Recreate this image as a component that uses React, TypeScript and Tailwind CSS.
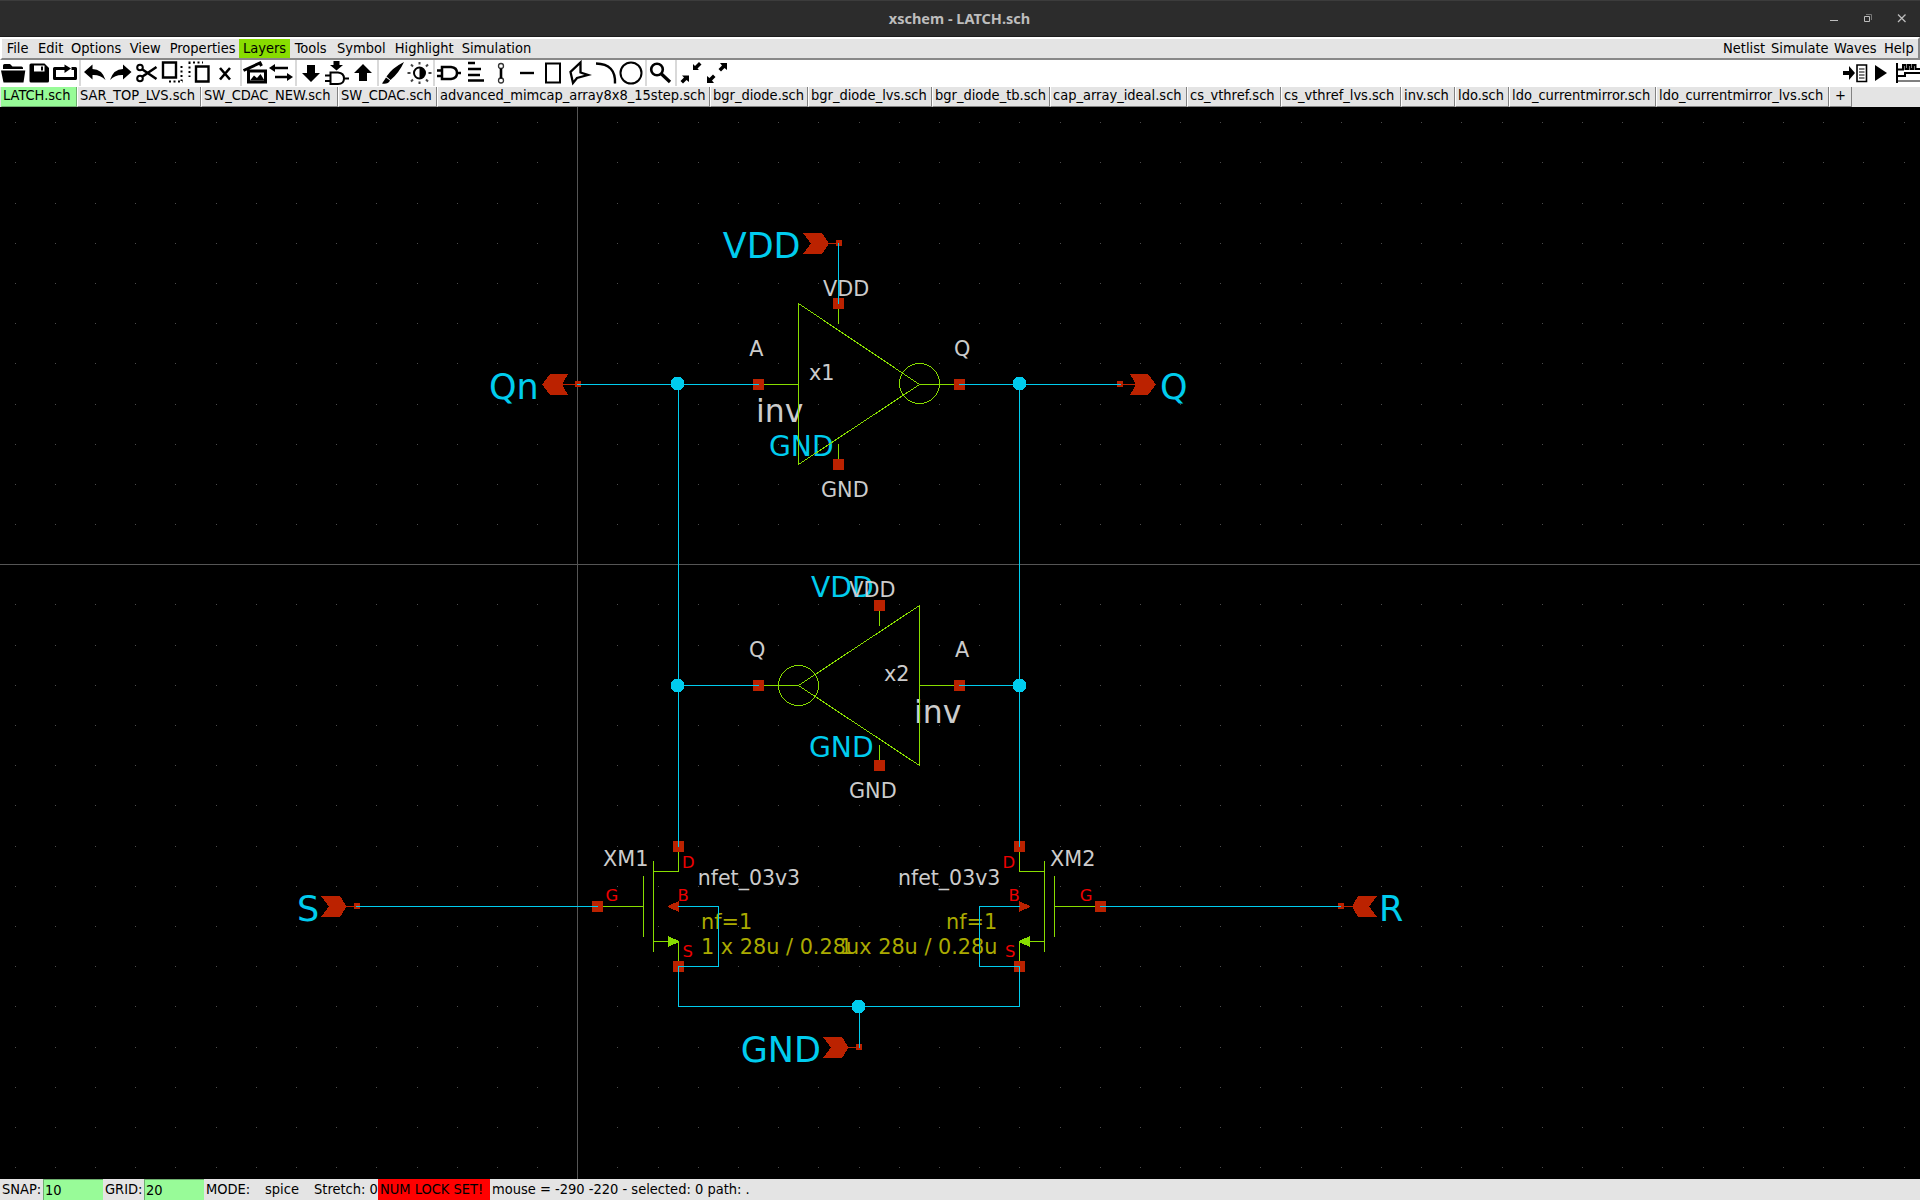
import React from "react";

const CYAN = "#00ccee";
const GREEN = "#88dd00";
const RED = "#bb2200";
const GREY = "#cccccc";
const OLIVE = "#aaaa00";
const PIN = "#ee0000";

const leftMenu: [string, number][] = [
  ["File", 32], ["Edit", 33], ["Options", 58], ["View", 40], ["Properties", 74],
  ["Layers", 51], ["Tools", 43], ["Symbol", 57], ["Highlight", 67], ["Simulation", 80],
];
const rightMenu: [string, number][] = [["Netlist", 48], ["Simulate", 63], ["Waves", 50], ["Help", 38]];

const tabs: [string, number][] = [
  ["LATCH.sch", 76], ["SAR_TOP_LVS.sch", 124], ["SW_CDAC_NEW.sch", 137], ["SW_CDAC.sch", 99],
  ["advanced_mimcap_array8x8_15step.sch", 273], ["bgr_diode.sch", 98], ["bgr_diode_lvs.sch", 124],
  ["bgr_diode_tb.sch", 118], ["cap_array_ideal.sch", 137], ["cs_vthref.sch", 94],
  ["cs_vthref_lvs.sch", 120], ["inv.sch", 54], ["ldo.sch", 54], ["ldo_currentmirror.sch", 147],
  ["ldo_currentmirror_lvs.sch", 173], ["+", 23],
];

// Each icon is drawn in window coordinates; x and w give its slice of the toolbar.
function Icon({ x, w, children }: { x: number; w: number; children?: React.ReactNode }) {
  return (
    <svg className="block shrink-0" width={w} height={26} viewBox={`${x} 60 ${w} 26`} fill="none" stroke="#000" strokeWidth={2}>
      {children}
    </svg>
  );
}

const Sep = () => <div className="h-[26px] w-[2px] shrink-0 bg-[#d9d9d9]" />;

function Toolbar() {
  return (
    <div className="flex h-[27px] w-full shrink-0 bg-white">
      <Icon x={0} w={27}>
        <path d="M3 69V65.5Q3 64 4.500 64H10L12.500 66.500H21.500Q23 66.500 23 68V69ZM1 70.500H25.300L23.500 82.500H3.500Z" fill="#000" stroke="none" />
      </Icon>
      <Icon x={27} w={24}>
        <path d="M31 63.500H44.500L49 68V81Q49 82.500 47.500 82.500H31Q29.500 82.500 29.500 81V65Q29.500 63.500 31 63.500Z" fill="#000" stroke="none" />
        <path d="M34 65.500H44.500V71.500H34Z" fill="#fff" stroke="none" />
        <path d="M41 66.500H43V70.500H41Z" fill="#000" stroke="none" />
      </Icon>
      <Icon x={51} w={28}>
        <path d="M65 68.500H54.500V78.500H75.500V68.500H71.500" strokeWidth={3} strokeLinejoin="round" />
        <path d="M64.500 64.500L71 68.500L64.500 73Z" fill="#000" stroke="none" />
      </Icon>
      <Sep />
      <Icon x={81} w={27}>
        <path d="M84 72L92.500 64.500V69Q102 69 105.500 80Q100 74.500 92.500 75V79.500Z" fill="#000" stroke="none" />
      </Icon>
      <Icon x={108} w={26}>
        <path d="M131.500 72L123 64.500V69Q113.500 69 110 80Q115.500 74.500 123 75V79.500Z" fill="#000" stroke="none" />
      </Icon>
      <Icon x={134} w={25}>
        <circle cx={140} cy={67.500} r={2.800} /><circle cx={140} cy={78.500} r={2.800} />
        <path d="M142.500 69.500L156.500 79M142.500 76.500L156.500 67" strokeWidth={2.600} />
      </Icon>
      <Icon x={159} w={28}>
        <path d="M163 62.500H176V77.500H163Z" strokeWidth={2.400} />
        <path d="M169 81.500H183M181.500 66V81" strokeDasharray="2 2.500" />
      </Icon>
      <Icon x={187} w={26}>
        <path d="M196 66.500H208.500V81.500H196Z" strokeWidth={2.400} />
        <path d="M188.500 62.500H203M189.500 62V77" strokeDasharray="2 2.500" />
      </Icon>
      <Icon x={213} w={27}><path d="M220 68L230 79.500M230 68L220 79.500" strokeWidth={2.600} /></Icon>
      <Sep />
      <Icon x={242} w={26}>
        <path d="M248.500 71H265.500V82H248.500ZM243.500 70.500L260 63L261.500 66" strokeWidth={3} />
        <path d="M250 80.500L254 75.500L257 78L260.500 74L264.500 80.500Z" fill="#000" stroke="none" />
      </Icon>
      <Icon x={268} w={27}>
        <path d="M273 68H288M275 77H290" strokeWidth={2.400} />
        <path d="M269 68L275 64V72ZM293 77L287 73V81Z" fill="#000" stroke="none" />
      </Icon>
      <Sep />
      <Icon x={297} w={26}><path d="M307 65H315V73H320L311 82L302 73H307Z" fill="#000" stroke="none" /></Icon>
      <Icon x={323} w={28}>
        <path d="M333.500 61H339.500V65H343L336.500 70.500L330 65H333.500Z" fill="#000" stroke="none" />
        <path d="M330.500 72.500H338Q344 73 344 78.500Q344 84 338 84H330.500ZM325 75.500H330M325 81H330M344 78.500H349" />
      </Icon>
      <Icon x={351} w={26}><path d="M359 81V73H354L363 64L372 73H367V81Z" fill="#000" stroke="none" /></Icon>
      <Sep />
      <Icon x={379} w={26}>
        <path d="M404 62Q392 68 386.500 76.500L390.500 80Q399 73 404 62ZM386 77.500L390 80.500Q388 84.500 382 83.500Q384.500 80 386 77.500Z" fill="#000" stroke="none" />
      </Icon>
      <Icon x={405} w={28}>
        <circle cx={419.500} cy={73} r={5.500} />
        <path d="M419.500 67.500A5.500 5.500 0 0 1 419.500 78.500Z" fill="#000" stroke="none" />
        <path d="M419.500 62V64.500M419.500 81.500V84M407.500 73H410.500M428.500 73H431.500M411 64.500L413 66.500M428 64.500L426 66.500M411 81.500L413 79.500M428 81.500L426 79.500" stroke="#444" />
      </Icon>
      <Sep />
      <Icon x={435} w={29}>
        <path d="M442 67H451Q457 67.500 457 73Q457 78.500 451 79H442ZM437 70.500H442M437 76H442M457 73H461" strokeWidth={2.500} />
      </Icon>
      <Icon x={464} w={24}><path d="M468 63H475M468 69H481M468 75H480M468 80.500H484" strokeWidth={2.400} /></Icon>
      <Icon x={488} w={28}>
        <circle cx={501} cy={66} r={2.500} strokeWidth={1.300} stroke="#333" /><circle cx={501} cy={80.500} r={2.500} strokeWidth={1.300} stroke="#333" />
        <path d="M501 68.500V78.500" strokeWidth={2.600} />
      </Icon>
      <Icon x={516} w={26}><path d="M520 73H534" strokeWidth={2.400} /></Icon>
      <Icon x={542} w={24}><path d="M546 63.500H560V82.500H546Z" /></Icon>
      <Icon x={566} w={28}><path d="M580.500 62.500V72.500L588 75L577 78L573 83L570.500 72Z" strokeWidth={2.300} /></Icon>
      <Icon x={594} w={24}><path d="M596 63.500Q616 64 615 83.500" strokeWidth={2.400} /></Icon>
      <Icon x={618} w={27}><circle cx={631} cy={73} r={10.500} /></Icon>
      <Sep />
      <Icon x={647} w={28}>
        <circle cx={657} cy={69.500} r={5.800} strokeWidth={2.600} /><path d="M661.500 74L670 82" strokeWidth={3.200} />
      </Icon>
      <Sep />
      <Icon x={677} w={27}>
        <path d="M693 70V64L695 66L699 62L701.500 64.500L697.500 68.500L699 70ZM689 75.500V82L686.500 80L683 83.500L680.500 81L684 77.500L682 75.500Z" fill="#000" stroke="none" />
      </Icon>
      <Icon x={704} w={28}>
        <path d="M727 63V70L724.500 68L721 71.500L718.500 69L722 65.500L720 63ZM707 83V76L709.500 78L713 74.500L715.500 77L712 80.500L714 83Z" fill="#000" stroke="none" />
      </Icon>
      <div className="flex-1" />
      <Icon x={1840} w={30}>
        <path d="M1843 71H1849V66L1855 73L1849 80V75H1843Z" fill="#000" stroke="none" />
        <path d="M1857 65H1866.500V81.500H1857Z" strokeWidth={1.600} />
        <path d="M1859 69H1864.500M1859 72H1864.500M1859 75H1864.500M1859 78H1864.500" strokeWidth={1} />
      </Icon>
      <Icon x={1870} w={24}><path d="M1875 65L1887 73L1875 81Z" fill="#000" stroke="none" /></Icon>
      <Icon x={1894} w={26}>
        <path d="M1897 63V83M1897 69.500H1903V65H1905.500V69H1908V65H1910.500V69H1913V65H1915.500V69H1920M1897 76H1905V73H1920" />
        <path d="M1897 81H1920" strokeWidth={1} />
      </Icon>
    </div>
  );
}

function T({ x, y, s = 20.8, c = GREY, children }: { x: number; y: number; s?: number; c?: string; children: React.ReactNode }) {
  return <text x={x} y={y} fontSize={s} fill={c}>{children}</text>;
}

const Pin = ({ x, y }: { x: number; y: number }) => <rect x={x - 5} y={y - 5} width={11} height={11} fill={RED} />;
const SmallPin = ({ x, y }: { x: number; y: number }) => <rect x={x - 3} y={y - 3} width={6} height={6} fill={RED} />;
const Dot = ({ x, y }: { x: number; y: number }) => <circle cx={x} cy={y} r={6.8} fill={CYAN} />;

const dots: [number, number][] = [];
for (let i = 0; i < 48; i++)
  for (let j = 0; j < 27; j++) dots.push([Math.floor(15.1 + 40.19 * i), Math.floor(122.7 + 40.19 * j)]);

function Schematic() {
  return (
    <svg
      className="block h-[1072px] w-[1920px] shrink-0 bg-black font-['DejaVu_Sans',sans-serif]"
      viewBox="0 107 1920 1072"
      shapeRendering="crispEdges"
    >
      <path d={dots.map(([x, y]) => `M${x} ${y}h1v1h-1z`).join("")} fill="#4c4c4c" />
      <path d="M577.500 107V1179M0 564.500H1920" stroke="#555555" />

      <T x={722.7} y={257.8} s={35} c={CYAN}>VDD</T>
      <T x={489} y={398.8} s={35} c={CYAN}>Qn</T>
      <T x={1160} y={398.8} s={35} c={CYAN}>Q</T>
      <T x={297} y={920.8} s={35} c={CYAN}>S</T>
      <T x={1379} y={920.8} s={35} c={CYAN}>R</T>
      <T x={740.7} y={1061.6} s={35} c={CYAN}>GND</T>

      <T x={769} y={455.7} s={28.2} c={CYAN}>GND</T>
      <T x={811} y={596.8} s={28.2} c={CYAN}>VDD</T>
      <T x={809} y={756.7} s={28.2} c={CYAN}>GND</T>

      <T x={823.1} y={295.7}>VDD</T>
      <T x={749.2} y={355.7}>A</T>
      <T x={809} y={380}>x1</T>
      <T x={756} y={421.6} s={31.5}>inv</T>
      <T x={821} y={497}>GND</T>
      <T x={954} y={355.7}>Q</T>

      <T x={849.3} y={596.8}>VDD</T>
      <T x={749} y={657}>Q</T>
      <T x={955} y={657}>A</T>
      <T x={884} y={681}>x2</T>
      <T x={914} y={722.6} s={31.5}>inv</T>
      <T x={849} y={797.6}>GND</T>

      <T x={603} y={865.7}>XM1</T>
      <T x={697.8} y={884.7} s={20.5}>nfet_03v3</T>
      <T x={701} y={928.7} c={OLIVE}>nf=1</T>
      <T x={701} y={953.7} c={OLIVE}>1 x 28u / 0.28u</T>
      <T x={1050} y={865.7}>XM2</T>
      <T x={898} y={884.7} s={20.5}>nfet_03v3</T>
      <T x={946} y={928.7} c={OLIVE}>nf=1</T>
      <T x={839.4} y={953.7} c={OLIVE}>1 x 28u / 0.28u</T>

      <T x={682} y={868.3} s={16.4} c={PIN}>D</T>
      <T x={677.4} y={901} s={16.4} c={PIN}>B</T>
      <T x={682.6} y={956.8} s={16.4} c={PIN}>S</T>
      <T x={605.4} y={901} s={16.4} c={PIN}>G</T>
      <T x={1002.4} y={868.3} s={16.4} c={PIN}>D</T>
      <T x={1008.4} y={901} s={16.4} c={PIN}>B</T>
      <T x={1004.9} y={956.8} s={16.4} c={PIN}>S</T>
      <T x={1079.7} y={901} s={16.4} c={PIN}>G</T>

      <g fill="none" stroke={GREEN}>
        <path d="M798.500 303V465M798.500 303.500L919.500 384.500M798.500 464.500L919.500 384.500M764 384.500H798M919 384.500H954M838.500 309V324M838.500 444V459" />
        <circle cx={919.5} cy={383.5} r={20} />
        <path d="M919.500 605V766M919.500 605.500L798.500 685.500M919.500 765.500L798.500 685.500M764 685.500H799M919 685.500H954M879.500 611V626M879.500 745V760" />
        <circle cx={798.5} cy={685.5} r={20} />
        <path d="M678.500 852V871.500H653M653.500 861V952M643.500 876V937M603 906.500H643M653 941.500H668M678.500 941V961" />
        <path d="M1019.500 852V871.500H1044M1044.500 861V952M1054.500 876V937M1054 906.500H1095M1030 941.500H1044M1019.500 941V961" />
      </g>
      <path d="M668 936L679 941V942L668 947ZM1030 936L1019 941V942L1030 947Z" fill={GREEN} />

      <Pin x={838} y={303} /><Pin x={838} y={464} /><Pin x={758} y={384} /><Pin x={959} y={384} />
      <Pin x={879} y={605} /><Pin x={879} y={765} /><Pin x={758} y={685} /><Pin x={959} y={685} />
      <Pin x={678} y={846} /><Pin x={678} y={966} /><Pin x={597} y={906} />
      <Pin x={1019} y={846} /><Pin x={1019} y={966} /><Pin x={1100} y={906} />
      <SmallPin x={839} y={243} /><SmallPin x={578} y={384} /><SmallPin x={1120} y={384} />
      <SmallPin x={357} y={906} /><SmallPin x={1341} y={906} /><SmallPin x={859} y={1047} />

      <g fill={RED}>
        <path d="M803 233H822L829 243.500L822 254H803L811 243.500Z" />
        <path d="M568 374H550L542 384.500L550 395H568L562 384.500Z" />
        <path d="M1130 374H1148L1156 384.500L1148 395H1130L1136 384.500Z" />
        <path d="M321 896H340L346.500 906.500L340 917H321L329 906.500Z" />
        <path d="M1377 896H1358L1352 906.500L1358 917H1377L1369 906.500Z" />
        <path d="M823 1037H842L848.500 1047.500L842 1058H823L831 1047.500Z" />
        <path d="M679 901L668 906V907L679 912ZM1019 901L1030 906V907L1019 912Z" />
      </g>
      <path d="M828 243.500H836M562 384.500H575M1123 384.500H1137M346 906.500H354M1344 906.500H1353M848 1047.500H856" stroke={RED} />

      <path
        d="M838.500 243V304M577 384.500H759M959 384.500H1121M678.500 384V847M1019.500 384V847M678 685.500H759M959 685.500H1020M356 906.500H598M1100 906.500H1341M678 906.500H718.500V966.500H678M1020 906.500H979.500V966.500H1020M678.500 966V1006.500H1019.500V966M859.500 1006V1048"
        fill="none" stroke={CYAN}
      />
      <Dot x={677.5} y={383.5} /><Dot x={1019.5} y={383.5} /><Dot x={677.5} y={685.5} /><Dot x={1019.5} y={685.5} /><Dot x={858.5} y={1006.5} />
    </svg>
  );
}

export default function App() {
  return (
    <div className="flex h-[1200px] w-[1920px] flex-col overflow-hidden bg-black font-['DejaVu_Sans_Condensed','DejaVu_Sans',sans-serif] text-[14.5px] leading-none text-black">
      <header className="flex h-[37px] shrink-0 items-center border-t border-b border-t-[#3c3c3c] border-b-[#1c1c1c] bg-[#2c2c2c]">
        <div className="w-[119px]" />
        <h1 className="flex-1 text-center font-['Noto_Sans',sans-serif] text-[14.5px] font-bold text-[#bdbdbd]">xschem - LATCH.sch</h1>
        <svg className="block" width={120} height={35} viewBox="1800 1 120 35" fill="none" stroke="#bdbdbd">
          <path d="M1830 20.500H1838" />
          <path d="M1864.500 16.500H1869.500V21.500H1864.500Z" />
          <path d="M1866 14.500H1871.500V20" stroke="#777" />
          <path d="M1898 14.500L1905.500 22M1905.500 14.500L1898 22" strokeWidth={1.3} />
        </svg>
      </header>

      <nav className="flex h-[23px] shrink-0 border-t-2 border-r-2 border-b-2 border-l-2 border-t-white border-r-[#888] border-b-[#888] border-l-white bg-[#e4e4e4]">
        {leftMenu.map(([label, w]) => (
          <div
            key={label}
            className={`h-[19px] shrink-0 pt-[2px] whitespace-nowrap ${label === "Layers" ? "bg-[#88dd00] pl-1" : label === "Edit" || label === "Options" || label === "Symbol" ? "pl-1" : "pl-[4.7px]"}`}
            style={{ width: w }}
          >
            {label}
          </div>
        ))}
        <div className="flex-1" />
        {rightMenu.map(([label, w]) => (
          <div key={label} className="h-[19px] shrink-0 pt-[2px] pl-1 whitespace-nowrap" style={{ width: w }}>{label}</div>
        ))}
      </nav>

      <Toolbar />

      <div className="flex h-5 shrink-0 bg-[#e4e4e4] pl-px">
        {tabs.map(([label, w], i) => (
          <div
            key={label}
            className={`shrink-0 border-r border-b border-l pt-px whitespace-nowrap ${
              i === 0 ? "border-r-[#6fae6f] border-b-[#6fae6f] border-l-[#98fb98] bg-[#98fb98] pl-[1px]" : "border-r-[#828282] border-b-[#828282] border-l-white pl-[2px]"
            } ${label === "+" ? "pl-[5px]" : ""}`}
            style={{ width: w }}
          >
            {label}
          </div>
        ))}
      </div>

      <Schematic />

      <footer className="flex h-[21px] shrink-0 bg-[#e4e4e4] pl-px whitespace-nowrap *:pt-[3px]">
        <div className="w-[42px] pl-px">SNAP:</div>
        <div className="w-[60px] border-t border-l border-[#6fae6f] bg-[#98fb98] pl-px">10</div>
        <div className="w-[41px] pl-[2px]">GRID:</div>
        <div className="w-[60px] border-t border-l border-[#6fae6f] bg-[#98fb98] pl-px">20</div>
        <div className="w-[60px] pl-[2px]">MODE:</div>
        <div className="w-[49px] pl-px">spice</div>
        <div className="w-[65px] pl-px">Stretch: 0</div>
        <div className="w-[112px] bg-[#ff0000] pl-[2px]">NUM LOCK SET!</div>
        <div className="pl-[2px]">mouse = -290 -220 - selected: 0 path: .</div>
      </footer>
    </div>
  );
}
